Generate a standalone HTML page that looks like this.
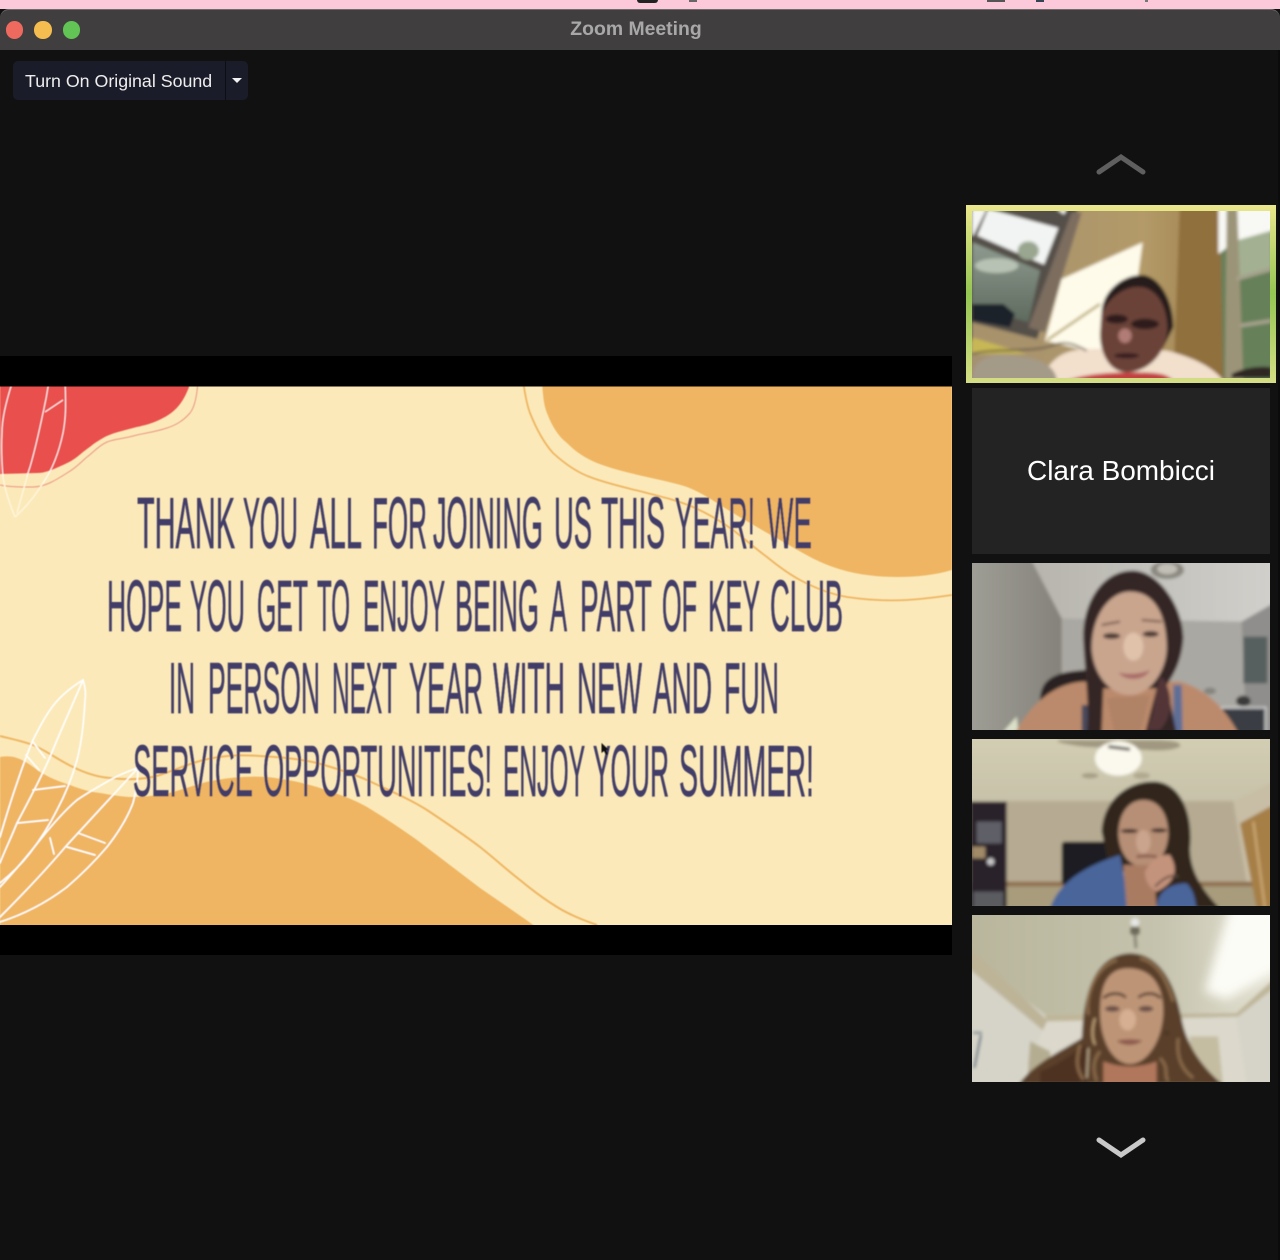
<!DOCTYPE html>
<html lang="en"><head><meta charset="utf-8"><title>Zoom Meeting</title>
<style>
html,body{margin:0;padding:0;background:#111;}
body{width:1280px;height:1260px;position:relative;overflow:hidden;font-family:"Liberation Sans",sans-serif;}
.abs{position:absolute;}
svg{display:block;}
</style></head><body>
<div class="abs" style="left:0;top:0;width:1280px;height:9px;background:#fcc9db"></div>
<div class="abs" style="left:637px;top:0;width:21px;height:3px;background:#222;border-radius:0 0 6px 6px"></div>
<div class="abs" style="left:689px;top:0;width:8px;height:2px;background:#666"></div>
<div class="abs" style="left:987px;top:0;width:18px;height:2px;background:#555"></div>
<div class="abs" style="left:1036px;top:0;width:8px;height:2px;background:#345"></div>
<div class="abs" style="left:1145px;top:0;width:3px;height:2px;background:#777"></div>
<div class="abs" style="left:0;top:9px;width:1280px;height:41px;background:#403e3f;border-top:1px solid #6e6c6d;box-sizing:border-box;border-radius:9px 9px 0 0"></div>
<div class="abs" style="left:5.7px;top:21.3px;width:17.4px;height:17.4px;border-radius:50%;background:#ee6a5f"></div>
<div class="abs" style="left:34.3px;top:21.3px;width:17.4px;height:17.4px;border-radius:50%;background:#f5bd4f"></div>
<div class="abs" style="left:62.8px;top:21.3px;width:17.4px;height:17.4px;border-radius:50%;background:#61c454"></div>
<div class="abs" style="left:536px;top:18px;width:200px;text-align:center;font-weight:bold;font-size:19.4px;line-height:22px;color:#a9a8a8">Zoom Meeting</div>
<div class="abs" style="left:0;top:50px;width:1280px;height:1210px;background:#111"></div>
<div class="abs" style="left:13px;top:61px;width:235px;height:39px;border-radius:5px;background:#1b1c29"></div>
<div class="abs" style="left:225px;top:61px;width:1px;height:39px;background:#0d0d14"></div>
<div class="abs" style="left:25px;top:70.5px;font-size:17.8px;line-height:21px;color:#eeeeee;white-space:nowrap">Turn On Original Sound</div>
<div class="abs" style="left:232px;top:77.5px;width:0;height:0;border-left:5px solid transparent;border-right:5px solid transparent;border-top:5px solid #f2f2f2"></div>

<svg class="abs" style="left:0;top:0" width="1280" height="1260" viewBox="0 0 1280 1260">
<defs>
<linearGradient id="bd" x1="0" y1="0" x2="0" y2="1"><stop offset="0" stop-color="#ebe78d"/><stop offset=".5" stop-color="#95c553"/><stop offset="1" stop-color="#d5de85"/></linearGradient>
<filter id="s" filterUnits="userSpaceOnUse" x="-20" y="340" width="1000" height="640"><feGaussianBlur stdDeviation=".45"/></filter>
<clipPath id="sc"><rect x="0" y="386.5" width="952" height="538.5"/></clipPath>
</defs>
<rect x="0" y="356" width="952" height="599" fill="#000"/>
<rect x="0" y="386.5" width="952" height="538.5" fill="#fbe9b9"/>
<g clip-path="url(#sc)"><g filter="url(#s)">
<path d="M189 387C183 403 175 412 163 418C150 425 140 426 133 428C118 432 110 434 103 438C94 443 90 447 83 452C76 458 72 461 63 465C52 470 45 473 37 473L0 474V380H189Z" fill="#e84f4d"/>
<path d="M198 380C197 398 194 408 190 413C183 421 176 425 167 428C155 432 145 433 133 436C122 439 114 439 107 442C98 446 94 452 87 457C80 463 76 468 67 473C56 480 45 487 33 487C20 487 10 487 0 485" fill="none" stroke="#ea9483" stroke-width="1"/>
<path d="M542 380C543 398 544 405 547 413C552 426 558 436 567 443C576 452 585 458 597 463C612 469 630 473 647 477C660 480 675 483 687 487C703 493 718 504 733 513C750 523 765 532 780 540C798 550 815 561 833 567C853 574 875 577 897 577C917 577 935 575 952 570V380Z" fill="#efb562"/>
<path d="M523 380C525 395 527 405 530 413C536 428 544 443 553 453C564 463 576 472 590 477C608 484 628 488 647 493C663 497 679 501 693 507C709 514 722 522 733 530C746 540 756 549 767 557C778 566 789 574 800 580C815 588 830 594 847 597C867 600 887 601 907 600C922 599 938 597 952 595" fill="none" stroke="#efb562" stroke-width="1.8"/>
<path d="M0 757C6 756 12 756 17 758C26 761 33 767 40 772C50 778 60 782 70 785C80 789 90 792 100 793C112 795 122 797 133 797C146 797 160 795 173 792C188 788 202 782 217 780C233 777 250 776 267 777C285 779 300 782 317 787C335 793 351 798 367 807C385 818 400 828 417 840C438 856 459 872 480 888C500 902 520 915 540 930H0Z" fill="#efb562"/>
<path d="M0 736C12 739 22 741 33 745C47 751 60 761 73 767C85 773 97 777 110 778C127 780 144 780 160 775C178 769 195 761 213 758C229 755 245 755 260 756C280 757 300 759 317 763C335 768 351 773 367 780C388 790 408 798 427 810C445 822 463 834 480 847C494 858 507 870 520 880C532 890 544 899 557 907C570 915 583 920 597 925" fill="none" stroke="#efb562" stroke-width="2"/>
<g fill="none" stroke="#fff" stroke-width="1.2" opacity=".9">
<path d="M65 380C66 405 66 418 63 433C59 452 52 470 43 483"/>
<path d="M13 380C5 405 2 420 2 433C1 450 2 465 3 477"/>
<path d="M49 380C47 396 45 404 43 413C39 432 35 450 30 467C29 470 28 472 27 477"/>
<path d="M45 412L63 400"/>
</g>
<path d="M43 483C35 496 25 508 15 517M3 477C5 490 10 505 15 517M27 477 17 513" fill="none" stroke="#fff6dc" stroke-width="1.4"/>
<g fill="none" stroke="#fff" stroke-width="1.7" stroke-linecap="round">
<path d="M83 680C70 688 58 698 50 710C43 720 38 730 33 740C27 754 22 768 17 783C11 800 5 820 0 837"/>
<path d="M83 680C85 686 86 693 85 700C84 720 82 741 77 760C72 778 65 795 57 810C49 826 40 840 30 853C20 866 10 875 0 883"/>
<path d="M83 680C72 706 60 732 50 757C40 780 28 802 17 823C11 838 5 850 0 863"/>
<path d="M33 790 65 786M18 823 48 820M33 742 45 758M26 755 39 770"/>
<path d="M138 768C128 771 119 775 110 780C98 787 87 793 77 800C64 811 52 825 40 840C28 855 14 872 0 887"/>
<path d="M138 768C138 780 136 792 133 803C127 819 118 833 107 847C95 861 81 875 67 887C46 903 22 915 0 922"/>
<path d="M138 768C115 793 90 820 67 845C46 870 22 895 0 917"/>
<path d="M78 833 105 843M67 847 95 855M50 838 54 854"/>
</g>
<g font-family="'Liberation Sans',sans-serif" font-size="72" fill="#423e68" stroke="#423e68" stroke-width=".7">
<text x="137" y="548" textLength="98" lengthAdjust="spacingAndGlyphs">THANK</text>
<text x="243" y="548" textLength="55" lengthAdjust="spacingAndGlyphs">YOU</text>
<text x="310" y="548" textLength="52" lengthAdjust="spacingAndGlyphs">ALL</text>
<text x="372" y="548" textLength="55" lengthAdjust="spacingAndGlyphs">FOR</text>
<text x="433" y="548" textLength="110" lengthAdjust="spacingAndGlyphs">JOINING</text>
<text x="554" y="548" textLength="38" lengthAdjust="spacingAndGlyphs">US</text>
<text x="601" y="548" textLength="64" lengthAdjust="spacingAndGlyphs">THIS</text>
<text x="675" y="548" textLength="80" lengthAdjust="spacingAndGlyphs">YEAR!</text>
<text x="767" y="548" textLength="45" lengthAdjust="spacingAndGlyphs">WE</text>
<text x="107" y="631" textLength="75" lengthAdjust="spacingAndGlyphs">HOPE</text>
<text x="190" y="631" textLength="55" lengthAdjust="spacingAndGlyphs">YOU</text>
<text x="257" y="631" textLength="51" lengthAdjust="spacingAndGlyphs">GET</text>
<text x="317" y="631" textLength="33" lengthAdjust="spacingAndGlyphs">TO</text>
<text x="363" y="631" textLength="82" lengthAdjust="spacingAndGlyphs">ENJOY</text>
<text x="455" y="631" textLength="84" lengthAdjust="spacingAndGlyphs">BEING</text>
<text x="550" y="631" textLength="17" lengthAdjust="spacingAndGlyphs">A</text>
<text x="580" y="631" textLength="72" lengthAdjust="spacingAndGlyphs">PART</text>
<text x="662" y="631" textLength="35" lengthAdjust="spacingAndGlyphs">OF</text>
<text x="708" y="631" textLength="52" lengthAdjust="spacingAndGlyphs">KEY</text>
<text x="770" y="631" textLength="73" lengthAdjust="spacingAndGlyphs">CLUB</text>
<text x="169" y="713" textLength="26" lengthAdjust="spacingAndGlyphs">IN</text>
<text x="208" y="713" textLength="112" lengthAdjust="spacingAndGlyphs">PERSON</text>
<text x="332" y="713" textLength="65" lengthAdjust="spacingAndGlyphs">NEXT</text>
<text x="409" y="713" textLength="74" lengthAdjust="spacingAndGlyphs">YEAR</text>
<text x="493" y="713" textLength="72" lengthAdjust="spacingAndGlyphs">WITH</text>
<text x="577" y="713" textLength="65" lengthAdjust="spacingAndGlyphs">NEW</text>
<text x="653" y="713" textLength="59" lengthAdjust="spacingAndGlyphs">AND</text>
<text x="724" y="713" textLength="55" lengthAdjust="spacingAndGlyphs">FUN</text>
<text x="133" y="796" textLength="120" lengthAdjust="spacingAndGlyphs">SERVICE</text>
<text x="263" y="796" textLength="229" lengthAdjust="spacingAndGlyphs">OPPORTUNITIES!</text>
<text x="503" y="796" textLength="82" lengthAdjust="spacingAndGlyphs">ENJOY</text>
<text x="593" y="796" textLength="76" lengthAdjust="spacingAndGlyphs">YOUR</text>
<text x="679" y="796" textLength="135" lengthAdjust="spacingAndGlyphs">SUMMER!</text>
</g>
<path d="M601.5 743V753L604 751L606 755L608 754L606 750L609 750Z" fill="#111"/>
</g></g>
<path d="M1099 172L1121 157L1143 172" fill="none" stroke="#5f5f5f" stroke-width="5" stroke-linecap="round"/>
<path d="M1099 1140L1121 1155L1143 1140" fill="none" stroke="#c9c9c9" stroke-width="5" stroke-linecap="round"/>
<rect x="1278" y="50" width="2" height="1210" fill="#0b0b0b"/>
<rect x="966" y="205" width="310" height="178" fill="url(#bd)"/>
<rect x="972" y="388" width="298" height="166" fill="#232323"/>
<text x="1121" y="480" text-anchor="middle" font-family="'Liberation Sans',sans-serif" font-size="27.5" fill="#fff" textLength="188" lengthAdjust="spacingAndGlyphs">Clara Bombicci</text>
</svg>

<svg class="abs" style="left:972px;top:210.5px" width="298" height="167" viewBox="36 211 894 501">
<defs>
<filter id="b" filterUnits="userSpaceOnUse" x="-200" y="-200" width="1600" height="1800"><feGaussianBlur stdDeviation="4.5"/></filter>
<filter id="b2" filterUnits="userSpaceOnUse" x="-200" y="-200" width="1600" height="1800"><feGaussianBlur stdDeviation="14"/></filter>
<linearGradient id="t1w" x1="0" y1="0" x2="1" y2="0"><stop offset="0" stop-color="#a39071"/><stop offset=".55" stop-color="#b39a68"/><stop offset="1" stop-color="#8b6933"/></linearGradient>
<linearGradient id="t1l" x1="0" y1="0" x2="0" y2="1"><stop offset="0" stop-color="#8f9b90"/><stop offset="1" stop-color="#5e6a5e"/></linearGradient>
</defs>
<g filter="url(#b)">
<rect x="0" y="150" width="1000" height="600" fill="url(#t1w)"/>
<polygon points="660,180 780,180 795,720 640,720" fill="#90703c"/>
<polygon points="0,180 360,180 230,600 0,600" fill="#55504a"/>
<polygon points="85,205 295,262 252,372 52,285" fill="#f2f4f3"/>
<polygon points="38,305 240,390 205,545 36,495" fill="url(#t1l)"/>
<ellipse cx="110" cy="375" rx="65" ry="22" fill="#b8c2b4"/>
<ellipse cx="205" cy="330" rx="32" ry="28" fill="#9aa68f"/>
<polygon points="36,205 80,205 40,285 36,285" fill="#f5f6f4"/>
<polygon points="290,205 320,205 312,222" fill="#f5f6f4"/>
<polygon points="335,215 365,215 255,575 205,560" fill="#7c6d5e"/>
<polygon points="305,415 548,305 535,400 530,520 420,640 255,600" fill="#fffbea"/>
<path d="M262 598 420 490" stroke="#b0a060" stroke-width="7"/>
<path d="M36 490H130L165 520 150 560 36 540Z" fill="#1e2229"/>
<polygon points="36,545 250,600 250,640 36,610" fill="#a8926c"/>
<polygon points="36,590 200,640 36,640" fill="#c8b855"/>
<polygon points="780,190 1000,190 1000,720 790,720" fill="#66805a"/>
<polygon points="775,190 1000,190 1000,300 935,270 830,300 775,340" fill="#f8f8f4"/>
<polygon points="830,300 935,270 935,380 830,410" fill="#a3b092"/>
<polygon points="800,205 832,205 850,720 795,720" fill="#9c9478"/>
<path d="M830 415 935 385M840 555 935 540" stroke="#a5a28c" stroke-width="12"/>
<path d="M240 720C280 640 320 620 430 625L620 630C700 650 760 680 790 720Z" fill="#f2dfcc"/>
<path d="M36 720C36 650 90 630 200 650C260 660 290 690 290 720Z" fill="#a49a88"/>
<path d="M36 640C100 620 220 640 290 610C330 600 360 620 380 630" stroke="#5a5040" stroke-width="5" fill="none"/>
<path d="M815 700C850 680 900 675 935 680V712H815Z" fill="#2e2622"/>
<path d="M320 720C360 705 420 695 520 695C600 695 620 700 640 720Z" fill="#c2403f"/>
<path d="M425 510C430 450 490 400 550 403C600 410 640 480 640 560L610 620H425Z" fill="#271a1c"/>
<path d="M424 520C445 470 500 430 550 440C595 450 620 500 622 560C622 640 560 695 500 695C450 695 420 640 420 580Z" fill="#6a4238"/>
<ellipse cx="470" cy="535" rx="34" ry="14" fill="#2e1d1f"/><ellipse cx="555" cy="550" rx="42" ry="16" fill="#2e1d1f"/>
<ellipse cx="495" cy="585" rx="20" ry="22" fill="#b07c74"/>
<ellipse cx="500" cy="645" rx="38" ry="8" fill="#381f20"/>
</g></svg>

<svg class="abs" style="left:972px;top:563px" width="298" height="167" viewBox="36 24 894 501">
<defs>
<linearGradient id="t4c" x1="0" y1="0" x2="1" y2="0"><stop offset="0" stop-color="#b5b3ab"/><stop offset="1" stop-color="#d3d2ce"/></linearGradient>
<linearGradient id="t4l" x1="0" y1="0" x2="1" y2="0"><stop offset="0" stop-color="#a2a198"/><stop offset="1" stop-color="#84827b"/></linearGradient>
</defs>
<g filter="url(#b)">
<rect x="0" y="-50" width="1000" height="650" fill="#aaa8a2"/>
<polygon points="180,-50 1000,-50 1000,110 845,200 305,190" fill="url(#t4c)"/>
<polygon points="0,-50 180,-50 305,190 305,600 0,600" fill="url(#t4l)"/>
<polygon points="845,200 1000,110 1000,600 862,600" fill="#8f8e8c"/>
<ellipse cx="622" cy="45" rx="50" ry="27" fill="#8a8880"/><ellipse cx="622" cy="42" rx="30" ry="16" fill="#c2c0b6"/>
<rect x="850" y="245" width="72" height="140" fill="#56605e"/>
<rect x="785" y="458" width="132" height="80" fill="#3a3e44" stroke="#d8d8d8" stroke-width="5"/>
<ellipse cx="750" cy="408" rx="18" ry="10" fill="#85837e"/>
<ellipse cx="850" cy="438" rx="22" ry="16" fill="#3a3a3a"/>
<polygon points="130,530 170,485 175,530" fill="#dbe0c8"/>
<path d="M240 440C240 380 270 350 380 345V470H250Z" fill="#2b2120"/>
<path d="M165 535C210 450 280 385 370 380H660C730 400 790 450 835 535Z" fill="#bb8a6c"/>
<path d="M640 390 665 390 668 535 640 535Z" fill="#5f6e96"/>
<path d="M365 450 420 450 420 535 365 535Z" fill="#4a4a5c"/>
<path d="M370 260C365 140 430 45 520 47C600 50 670 160 670 250C665 320 640 360 620 390L650 535H555L590 400H430L425 535H380C390 470 375 350 370 260Z" fill="#362726"/>
<path d="M610 370C640 420 640 480 600 525H560C590 470 580 420 600 370Z" fill="#523538"/>
<path d="M395 280C395 180 450 110 510 110C590 110 620 190 620 280C618 350 570 420 510 420C450 420 400 360 395 280Z" fill="#c9a58e"/>
<ellipse cx="455" cy="243" rx="26" ry="9" fill="#4e3a34"/>
<ellipse cx="572" cy="237" rx="24" ry="9" fill="#4e3a34"/>
<path d="M425 210 480 200M545 195 605 200" stroke="#6a4e42" stroke-width="6" fill="none"/>
<ellipse cx="520" cy="275" rx="30" ry="42" fill="#e0c2aa"/>
<path d="M475 352C500 360 540 358 570 345C555 378 495 380 475 352Z" fill="#a96a68"/>
<polygon points="440,430 570,420 540,535 465,535" fill="#b08266"/>
</g></svg>

<svg class="abs" style="left:972px;top:739px" width="298" height="167" viewBox="36 552 894 501">
<defs><linearGradient id="t5c" x1="0" y1="0" x2="0" y2="1"><stop offset="0" stop-color="#d5d1b6"/><stop offset="1" stop-color="#c6c1a8"/></linearGradient></defs>
<g filter="url(#b)">
<rect x="0" y="500" width="1000" height="250" fill="url(#t5c)"/>
<rect x="0" y="738" width="1000" height="350" fill="#b6ab92"/>
<polygon points="820,740 1000,650 1000,1100 880,1100" fill="#c8bea6"/>
<rect x="0" y="985" width="1000" height="80" fill="#a89c7d"/>
<rect x="120" y="980" width="760" height="14" fill="#8f7050"/>
<rect x="30" y="740" width="110" height="320" fill="#29242c"/>
<rect x="50" y="800" width="75" height="65" fill="#5e5e68"/><rect x="36" y="875" width="40" height="35" fill="#a08a68"/><circle cx="92" cy="920" r="11" fill="#c8c8c8"/><rect x="40" y="1010" width="90" height="50" fill="#5a5c60"/>
<polygon points="840,805 940,750 940,1060 890,1060" fill="#a67f47"/>
<path d="M880 800 915 1060" stroke="#d4b07a" stroke-width="6"/>
<path d="M290 560C350 578 430 580 470 575C540 585 620 595 660 575C665 560 640 555 560 555H300Z" fill="#a09880"/>
<ellipse cx="475" cy="610" rx="70" ry="52" fill="#fbf9ee"/>
<ellipse cx="390" cy="662" rx="25" ry="8" fill="#a59c84"/><ellipse cx="545" cy="662" rx="25" ry="10" fill="#b0a78f"/>
<path d="M445 575 510 583" stroke="#4a4540" stroke-width="9"/>
<rect x="305" y="860" width="145" height="130" rx="10" fill="#1f1f22"/>
<path d="M425 830C430 730 510 675 590 680C670 690 700 790 690 880C690 950 730 1010 780 1060H590L560 950H450Z" fill="#33251f"/>
<path d="M475 840C475 770 510 735 550 735C600 735 625 780 625 840C620 900 590 935 550 935C510 935 480 900 475 840Z" fill="#b78f76"/>
<ellipse cx="508" cy="828" rx="26" ry="6" fill="#3a2a26"/>
<ellipse cx="597" cy="826" rx="24" ry="6" fill="#3a2a26"/>
<ellipse cx="550" cy="860" rx="22" ry="35" fill="#cba48e"/>
<path d="M530 905C550 902 570 902 590 905" stroke="#7a4c44" stroke-width="7" fill="none"/>
<path d="M270 1060C300 970 400 925 480 900C490 950 500 1010 510 1060Z" fill="#4a659a"/>
<path d="M490 930 580 930 590 1060 500 1060Z" fill="#a97c62"/>
<path d="M590 1060C590 1010 630 985 680 985C705 1010 705 1040 710 1060Z" fill="#4a659a"/>
<path d="M555 950C570 920 600 895 630 900C660 950 640 985 590 1010C570 1000 555 980 555 950Z" fill="#c4937b"/>
<path d="M585 995C605 975 630 955 655 965" stroke="#5a4a40" stroke-width="6" fill="none"/>
</g></svg>

<svg class="abs" style="left:972px;top:915px" width="298" height="167" viewBox="36 30 894 502">
<defs><linearGradient id="t6c" x1="0" y1="0" x2="1" y2="0"><stop offset="0" stop-color="#b8b59b"/><stop offset=".6" stop-color="#c5c3ad"/><stop offset="1" stop-color="#e8e6d8"/></linearGradient></defs>
<g filter="url(#b)">
<rect x="0" y="-30" width="1000" height="640" fill="#d6d4c8"/>
<polygon points="0,-30 1000,-30 1000,175 830,325 255,330 0,135" fill="url(#t6c)"/>
<polygon points="0,125 36,135 260,345 290,375 255,382 0,170" fill="#bdb498"/>
<polygon points="255,330 830,325 1000,170 1000,205 835,335 260,350" fill="#bfb69a"/>
<polygon points="260,350 830,340 870,600 150,600" fill="#dcd9cc"/>
<polygon points="210,410 270,440 270,540 200,540" fill="#b5ad92"/>
<polygon points="690,395 775,395 790,540 690,540" fill="#c5bda2"/>
<path d="M62 390 42 490" stroke="#3c5a78" stroke-width="6"/><path d="M38 384H65" stroke="#3c5a78" stroke-width="5"/>
<polygon points="820,-30 1000,-30 1000,170 800,285 735,260" fill="#fcfcf6" filter="url(#b2)"/>
<circle cx="525" cy="52" r="13" fill="#e6e6e4"/><rect x="510" y="65" width="30" height="25" rx="8" fill="#6d6a5a"/><path d="M525 90 528 130" stroke="#8a887a" stroke-width="10"/>
<path d="M175 540C215 480 300 440 365 400C370 270 400 150 510 145C610 145 650 260 665 340C680 430 740 500 790 540Z" fill="#5a3f2b"/>
<path d="M240 500C300 480 340 440 380 420L380 540H240Z" fill="#4e3324"/>
<path d="M385 330C375 280 400 190 470 165M640 290C620 220 590 170 540 160M360 420C350 460 345 490 370 525M655 400C650 450 660 490 700 520M420 440C395 470 400 500 410 530M600 460C630 490 610 510 625 530" stroke="#8a6a48" stroke-width="9" fill="none"/>
<path d="M420 320C420 230 450 190 505 190C565 190 610 230 610 320C608 410 560 478 510 478C460 478 420 410 420 320Z" fill="#bd9476"/>
<path d="M430 280C450 262 480 262 498 278M535 278C555 262 585 262 602 280" stroke="#3a2824" stroke-width="7" fill="none"/>
<ellipse cx="457" cy="312" rx="22" ry="9" fill="#6a5048"/><ellipse cx="558" cy="312" rx="22" ry="9" fill="#6a5048"/>
<ellipse cx="503" cy="345" rx="25" ry="32" fill="#d6ae92"/>
<path d="M470 408C495 402 525 402 548 408C525 425 490 425 470 408Z" fill="#8e5a4e"/>
<path d="M430 470C480 490 540 490 590 470L590 540H430Z" fill="#b0775c"/>
<circle cx="620" cy="385" r="5" fill="none" stroke="#3e2a20" stroke-width="3"/>
<path d="M385 430 380 520" stroke="#d8c8a8" stroke-width="4"/>
<path d="M405 340C395 370 395 400 405 420" stroke="#d8b888" stroke-width="5" fill="none"/>
</g></svg>
</body></html>
